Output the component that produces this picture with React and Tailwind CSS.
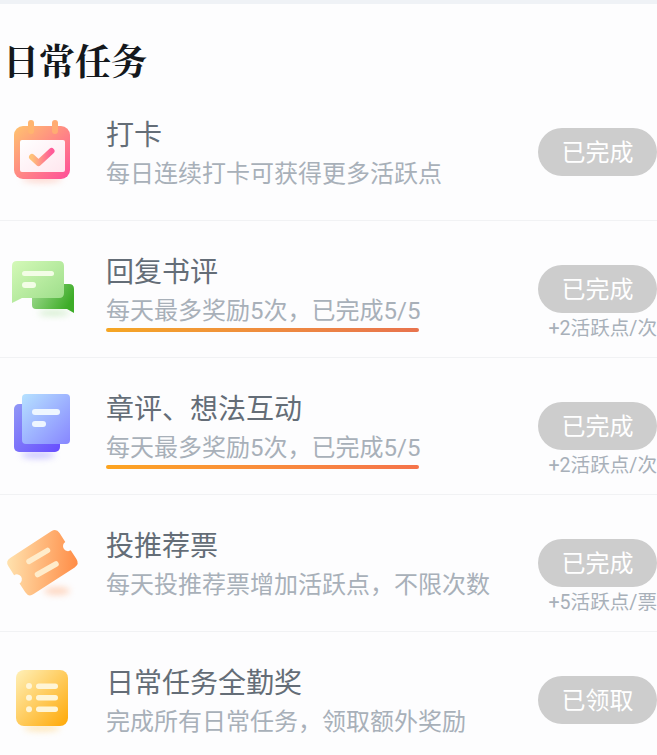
const SANS = "font-['Roboto','Noto_Sans_CJK_SC',sans-serif]";

const CalendarIcon = () => (
  <svg width="80" height="84" viewBox="0 0 80 84">
    <defs>
      <linearGradient id="calBody" x1="0" y1="0" x2="1" y2="1">
        <stop offset="0" stopColor="#ffc46e" />
        <stop offset="1" stopColor="#ff4d9a" />
      </linearGradient>
      <linearGradient id="calInner" x1="0" y1="0" x2="1" y2="1">
        <stop offset="0" stopColor="#ffffff" />
        <stop offset="1" stopColor="#ffe6ee" />
      </linearGradient>
      <linearGradient id="calCheck" x1="0" y1="0" x2="1" y2="0">
        <stop offset="0" stopColor="#ffc27a" />
        <stop offset="1" stopColor="#ff5a98" />
      </linearGradient>
      <filter id="calBlur" x="-50%" y="-100%" width="200%" height="300%">
        <feGaussianBlur stdDeviation="3" />
      </filter>
    </defs>
    <ellipse cx="42" cy="69" rx="20" ry="4" fill="#ffb9a8" opacity="0.5" filter="url(#calBlur)" />
    <rect x="14" y="16" width="56" height="53" rx="9" fill="url(#calBody)" />
    <rect x="28" y="10" width="6" height="14" rx="3" fill="#ffb56f" />
    <rect x="52" y="10" width="6" height="14" rx="3" fill="#ffac72" />
    <rect x="20" y="30" width="45" height="32" rx="2" fill="url(#calInner)" />
    <path d="M32 47 L38.5 53 L51.5 41" fill="none" stroke="url(#calCheck)" strokeWidth="6" strokeLinecap="round" strokeLinejoin="round" />
  </svg>
);

const ChatIcon = () => (
  <svg width="80" height="84" viewBox="0 0 80 84">
    <defs>
      <linearGradient id="chatBack" x1="0" y1="0" x2="1" y2="0.4">
        <stop offset="0" stopColor="#a5dd95" />
        <stop offset="1" stopColor="#3dac28" />
      </linearGradient>
      <linearGradient id="chatFront" x1="0" y1="0" x2="1" y2="1">
        <stop offset="0" stopColor="#d4f9b8" />
        <stop offset="1" stopColor="#9bdd88" />
      </linearGradient>
      <filter id="chatBlur" x="-50%" y="-100%" width="200%" height="300%">
        <feGaussianBlur stdDeviation="3" />
      </filter>
    </defs>
    <ellipse cx="54" cy="66" rx="16" ry="3" fill="#b4e4a8" opacity="0.55" filter="url(#chatBlur)" />
    <path d="M36 37 H69 Q74 37 74 42 V66 L67 62 H36 Q32 62 32 58 V41 Q32 37 36 37 Z" fill="url(#chatBack)" />
    <path d="M17 14 H59 Q64 14 64 19 V46 Q64 51 59 51 H22 L12 56 V19 Q12 14 17 14 Z" fill="url(#chatFront)" />
    <rect x="22" y="24" width="32" height="5" rx="2.5" fill="#f3fde6" />
    <rect x="22" y="35" width="14" height="6" rx="3" fill="#f3fde6" />
  </svg>
);

const NotesIcon = () => (
  <svg width="80" height="84" viewBox="0 0 80 84">
    <defs>
      <linearGradient id="noteBack" x1="0" y1="0" x2="1" y2="1">
        <stop offset="0" stopColor="#9198f6" />
        <stop offset="1" stopColor="#664cff" />
      </linearGradient>
      <linearGradient id="noteFront" x1="0" y1="0" x2="1" y2="1">
        <stop offset="0" stopColor="#b6e2ff" />
        <stop offset="1" stopColor="#8786ff" />
      </linearGradient>
      <filter id="noteBlur" x="-50%" y="-100%" width="200%" height="300%">
        <feGaussianBlur stdDeviation="3" />
      </filter>
    </defs>
    <ellipse cx="38" cy="71" rx="17" ry="3.5" fill="#a9a0ff" opacity="0.6" filter="url(#noteBlur)" />
    <rect x="14" y="20" width="46" height="48" rx="5" fill="url(#noteBack)" />
    <rect x="22" y="10" width="48" height="50" rx="4" fill="url(#noteFront)" />
    <rect x="32" y="25" width="28" height="6" rx="3" fill="#eef6ff" />
    <rect x="32" y="37" width="14" height="6" rx="3" fill="#eef6ff" />
  </svg>
);

const TicketIcon = () => (
  <svg width="80" height="84" viewBox="0 0 80 84">
    <defs>
      <linearGradient id="ticket" gradientUnits="userSpaceOnUse" x1="7" y1="40" x2="78" y2="44" gradientTransform="rotate(33 42 42)">
        <stop offset="0" stopColor="#ffe2ae" />
        <stop offset="1" stopColor="#ff8c46" />
      </linearGradient>
      <filter id="ticketBlur" x="-50%" y="-100%" width="200%" height="300%">
        <feGaussianBlur stdDeviation="3" />
      </filter>
    </defs>
    <ellipse cx="57" cy="70" rx="13" ry="4" fill="#ffc2a0" opacity="0.65" filter="url(#ticketBlur)" />
    <path
      transform="rotate(-33 42 42)"
      d="M18 20.5 H67 Q73 20.5 73 26.5 V37 A5 5 0 0 0 73 47 V57.5 Q73 63.5 67 63.5 H18 Q12 63.5 12 57.5 V47 A5 5 0 0 0 12 37 V26.5 Q12 20.5 18 20.5 Z"
      fill="url(#ticket)"
    />
    <path d="M29 40.3 L47.5 29.5" stroke="#ffeccb" strokeWidth="5.5" strokeLinecap="round" />
    <path d="M37.5 53.5 L56 43" stroke="#ffeccb" strokeWidth="5.5" strokeLinecap="round" />
  </svg>
);

const ListIcon = () => (
  <svg width="80" height="84" viewBox="0 0 80 84">
    <defs>
      <linearGradient id="listBody" x1="0" y1="0" x2="1" y2="1">
        <stop offset="0" stopColor="#fff0b8" />
        <stop offset="1" stopColor="#ffa805" />
      </linearGradient>
      <filter id="listBlur" x="-50%" y="-100%" width="200%" height="300%">
        <feGaussianBlur stdDeviation="3" />
      </filter>
    </defs>
    <ellipse cx="42" cy="70" rx="18" ry="3.5" fill="#ffd98f" opacity="0.6" filter="url(#listBlur)" />
    <rect x="16" y="12" width="52" height="56" rx="8" fill="url(#listBody)" />
    <circle cx="29" cy="28" r="3" fill="#fff5d6" />
    <circle cx="29" cy="39.7" r="3" fill="#fff5d6" />
    <circle cx="29" cy="51.3" r="3" fill="#fff5d6" />
    <rect x="36" y="25.5" width="22" height="5.5" rx="2.7" fill="#fff5d6" />
    <rect x="36" y="37" width="22" height="5.5" rx="2.7" fill="#fff5d6" />
    <rect x="36" y="48.5" width="22" height="5.5" rx="2.7" fill="#fff5d6" />
  </svg>
);

const tasks = [
  { icon: <CalendarIcon />, title: '打卡', desc: '每日连续打卡可获得更多活跃点', btn: '已完成' },
  {
    icon: <ChatIcon />,
    title: '回复书评',
    desc: '每天最多奖励5次\uff0c已完成5/5',
    btn: '已完成',
    note: '+2活跃点/次',
    bar: 'from-[#f5a623] to-[#e8734d]',
  },
  {
    icon: <NotesIcon />,
    title: '章评、想法互动',
    desc: '每天最多奖励5次\uff0c已完成5/5',
    btn: '已完成',
    note: '+2活跃点/次',
    bar: 'from-[#fda41f] to-[#f5734a]',
  },
  { icon: <TicketIcon />, title: '投推荐票', desc: '每天投推荐票增加活跃点\uff0c不限次数', btn: '已完成', note: '+5活跃点/票' },
  { icon: <ListIcon />, title: '日常任务全勤奖', desc: '完成所有日常任务\uff0c领取额外奖励', btn: '已领取' },
];

const TaskRow = ({ task }) => (
  <div className="flex h-[137px] shrink-0 items-start border-b border-[#f1f2f4]">
    <div className="-ml-px w-[107px] shrink-0 pt-[26px]">
      <div className="ml-px">{task.icon}</div>
    </div>
    <div className="min-w-0 flex-1 pt-[32px]">
      <div className="text-[28px] leading-[40px] text-[#646d77]">{task.title}</div>
      <div className="inline-flex flex-col">
        <div className="whitespace-nowrap text-[24px] leading-[37px] text-[#a8b0b9]">{task.desc}</div>
        {task.bar && <div className={`-mt-[2px] mr-px h-1 rounded-full bg-gradient-to-r ${task.bar}`} />}
      </div>
    </div>
    <div className="flex w-[119px] shrink-0 flex-col items-end pt-[44px]">
      <div className="flex h-12 w-full items-center justify-center rounded-full bg-[#cdcdcd] pt-px text-[24px] text-white">
        {task.btn}
      </div>
      {task.note && (
        <div className="mt-[2px] whitespace-nowrap text-[19.6px] leading-[28px] text-[#a8b0b9]">{task.note}</div>
      )}
    </div>
  </div>
);

export default function App() {
  return (
    <div className={`flex h-[755px] w-[657px] flex-col overflow-hidden bg-[#fdfdfe] ${SANS}`}>
      <div className="h-1 shrink-0 bg-[#eff2f6]" />
      <div className="flex h-20 shrink-0 items-center pl-[3px] pt-[31px] text-[36px] font-bold leading-[48px] text-[#14181c] font-['Noto_Serif_CJK_SC','Noto_Sans_CJK_SC',serif]">
        日常任务
      </div>
      {tasks.map((task) => (
        <TaskRow key={task.title} task={task} />
      ))}
    </div>
  );
}
